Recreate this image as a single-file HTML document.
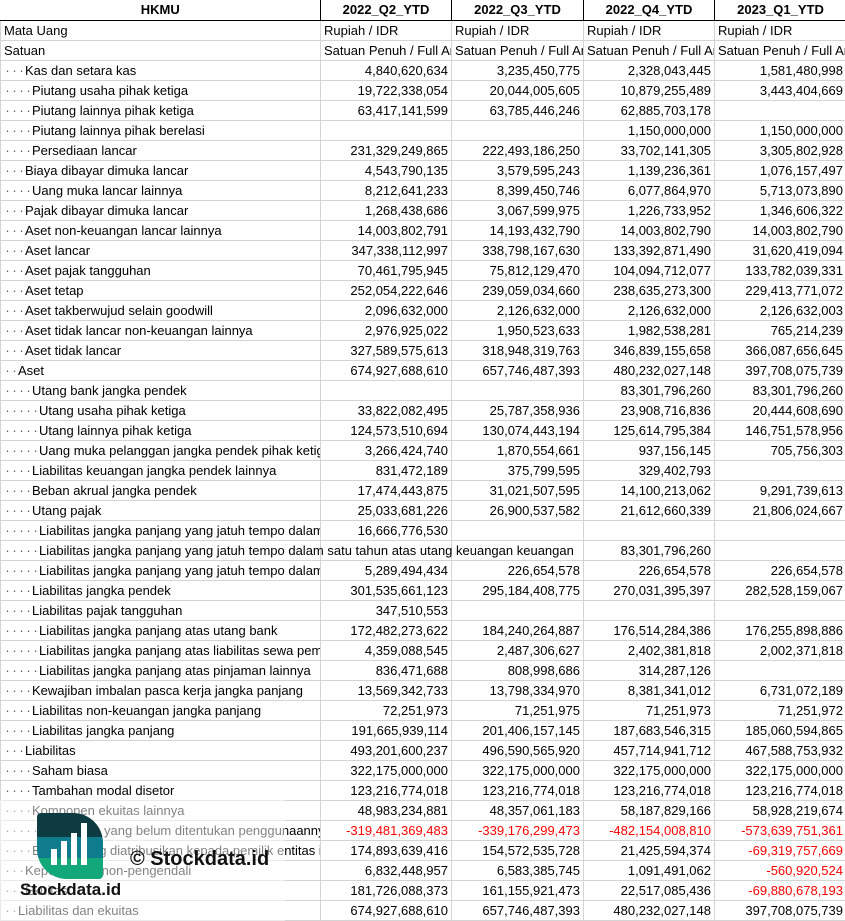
<!DOCTYPE html>
<html><head><meta charset="utf-8"><style>
*{margin:0;padding:0;box-sizing:border-box}
body{width:845px;height:921px;overflow:hidden;background:#fff;font-family:"Liberation Sans",sans-serif;font-size:13px;color:#000;position:relative}
table{border-collapse:collapse;table-layout:fixed;width:846px}
td{height:20px;border:1px solid #d4d4d4;white-space:nowrap;padding:1px 3px 0 3px;line-height:17px;overflow:hidden}
td.n{text-align:right}
td.l{overflow:visible}
td.l div{overflow:hidden;width:316px}
td.l div.w{width:580px;position:relative;z-index:2}
tr.h td{font-weight:bold;text-align:center;border:1px solid #000;border-top:none;padding-top:0;line-height:18px}
tr.h td:first-child{border-left:none}
.d{display:inline-block;width:7px;text-align:center;color:#555}
.r{color:#f00}
.ov{position:absolute;left:0;top:800px;width:285px;height:121px;background:rgba(255,255,255,.5);z-index:3}
.logo{position:absolute;left:37px;top:813px;width:66px;height:66px;border-radius:4px 30px 4px 30px;overflow:hidden;z-index:4;background:linear-gradient(#0d3b3f 0 36%,#0e7c8c 36% 68%,#12a87a 68%)}
.bar{position:absolute;bottom:14px;width:6px;background:#fff}
.wm1{position:absolute;left:130px;top:848px;font-weight:bold;font-size:20px;z-index:4;color:#111}
.wm2{position:absolute;left:20px;top:880px;font-weight:bold;font-size:17px;z-index:4;color:#111}
</style></head><body>
<table>
<colgroup><col style="width:320px"><col style="width:131px"><col style="width:132px"><col style="width:131px"><col style="width:132px"></colgroup>
<tr class="h"><td>HKMU</td><td>2022_Q2_YTD</td><td>2022_Q3_YTD</td><td>2022_Q4_YTD</td><td>2023_Q1_YTD</td></tr>
<tr><td>Mata Uang</td><td>Rupiah / IDR</td><td>Rupiah / IDR</td><td>Rupiah / IDR</td><td>Rupiah / IDR</td></tr>
<tr><td>Satuan</td><td style="padding-right:0">Satuan Penuh / Full Amount</td><td style="padding-right:0">Satuan Penuh / Full Amount</td><td style="padding-right:0">Satuan Penuh / Full Amount</td><td style="padding-right:0">Satuan Penuh / Full Amount</td></tr>
<tr><td class="l"><div><span class="d">·</span><span class="d">·</span><span class="d">·</span>Kas dan setara kas</div></td><td class="n">4,840,620,634</td><td class="n">3,235,450,775</td><td class="n">2,328,043,445</td><td class="n">1,581,480,998</td></tr>
<tr><td class="l"><div><span class="d">·</span><span class="d">·</span><span class="d">·</span><span class="d">·</span>Piutang usaha pihak ketiga</div></td><td class="n">19,722,338,054</td><td class="n">20,044,005,605</td><td class="n">10,879,255,489</td><td class="n">3,443,404,669</td></tr>
<tr><td class="l"><div><span class="d">·</span><span class="d">·</span><span class="d">·</span><span class="d">·</span>Piutang lainnya pihak ketiga</div></td><td class="n">63,417,141,599</td><td class="n">63,785,446,246</td><td class="n">62,885,703,178</td><td class="n"></td></tr>
<tr><td class="l"><div><span class="d">·</span><span class="d">·</span><span class="d">·</span><span class="d">·</span>Piutang lainnya pihak berelasi</div></td><td class="n"></td><td class="n"></td><td class="n">1,150,000,000</td><td class="n">1,150,000,000</td></tr>
<tr><td class="l"><div><span class="d">·</span><span class="d">·</span><span class="d">·</span><span class="d">·</span>Persediaan lancar</div></td><td class="n">231,329,249,865</td><td class="n">222,493,186,250</td><td class="n">33,702,141,305</td><td class="n">3,305,802,928</td></tr>
<tr><td class="l"><div><span class="d">·</span><span class="d">·</span><span class="d">·</span>Biaya dibayar dimuka lancar</div></td><td class="n">4,543,790,135</td><td class="n">3,579,595,243</td><td class="n">1,139,236,361</td><td class="n">1,076,157,497</td></tr>
<tr><td class="l"><div><span class="d">·</span><span class="d">·</span><span class="d">·</span><span class="d">·</span>Uang muka lancar lainnya</div></td><td class="n">8,212,641,233</td><td class="n">8,399,450,746</td><td class="n">6,077,864,970</td><td class="n">5,713,073,890</td></tr>
<tr><td class="l"><div><span class="d">·</span><span class="d">·</span><span class="d">·</span>Pajak dibayar dimuka lancar</div></td><td class="n">1,268,438,686</td><td class="n">3,067,599,975</td><td class="n">1,226,733,952</td><td class="n">1,346,606,322</td></tr>
<tr><td class="l"><div><span class="d">·</span><span class="d">·</span><span class="d">·</span>Aset non-keuangan lancar lainnya</div></td><td class="n">14,003,802,791</td><td class="n">14,193,432,790</td><td class="n">14,003,802,790</td><td class="n">14,003,802,790</td></tr>
<tr><td class="l"><div><span class="d">·</span><span class="d">·</span><span class="d">·</span>Aset lancar</div></td><td class="n">347,338,112,997</td><td class="n">338,798,167,630</td><td class="n">133,392,871,490</td><td class="n">31,620,419,094</td></tr>
<tr><td class="l"><div><span class="d">·</span><span class="d">·</span><span class="d">·</span>Aset pajak tangguhan</div></td><td class="n">70,461,795,945</td><td class="n">75,812,129,470</td><td class="n">104,094,712,077</td><td class="n">133,782,039,331</td></tr>
<tr><td class="l"><div><span class="d">·</span><span class="d">·</span><span class="d">·</span>Aset tetap</div></td><td class="n">252,054,222,646</td><td class="n">239,059,034,660</td><td class="n">238,635,273,300</td><td class="n">229,413,771,072</td></tr>
<tr><td class="l"><div><span class="d">·</span><span class="d">·</span><span class="d">·</span>Aset takberwujud selain goodwill</div></td><td class="n">2,096,632,000</td><td class="n">2,126,632,000</td><td class="n">2,126,632,000</td><td class="n">2,126,632,003</td></tr>
<tr><td class="l"><div><span class="d">·</span><span class="d">·</span><span class="d">·</span>Aset tidak lancar non-keuangan lainnya</div></td><td class="n">2,976,925,022</td><td class="n">1,950,523,633</td><td class="n">1,982,538,281</td><td class="n">765,214,239</td></tr>
<tr><td class="l"><div><span class="d">·</span><span class="d">·</span><span class="d">·</span>Aset tidak lancar</div></td><td class="n">327,589,575,613</td><td class="n">318,948,319,763</td><td class="n">346,839,155,658</td><td class="n">366,087,656,645</td></tr>
<tr><td class="l"><div><span class="d">·</span><span class="d">·</span>Aset</div></td><td class="n">674,927,688,610</td><td class="n">657,746,487,393</td><td class="n">480,232,027,148</td><td class="n">397,708,075,739</td></tr>
<tr><td class="l"><div><span class="d">·</span><span class="d">·</span><span class="d">·</span><span class="d">·</span>Utang bank jangka pendek</div></td><td class="n"></td><td class="n"></td><td class="n">83,301,796,260</td><td class="n">83,301,796,260</td></tr>
<tr><td class="l"><div><span class="d">·</span><span class="d">·</span><span class="d">·</span><span class="d">·</span><span class="d">·</span>Utang usaha pihak ketiga</div></td><td class="n">33,822,082,495</td><td class="n">25,787,358,936</td><td class="n">23,908,716,836</td><td class="n">20,444,608,690</td></tr>
<tr><td class="l"><div><span class="d">·</span><span class="d">·</span><span class="d">·</span><span class="d">·</span><span class="d">·</span>Utang lainnya pihak ketiga</div></td><td class="n">124,573,510,694</td><td class="n">130,074,443,194</td><td class="n">125,614,795,384</td><td class="n">146,751,578,956</td></tr>
<tr><td class="l"><div><span class="d">·</span><span class="d">·</span><span class="d">·</span><span class="d">·</span><span class="d">·</span>Uang muka pelanggan jangka pendek pihak ketiga</div></td><td class="n">3,266,424,740</td><td class="n">1,870,554,661</td><td class="n">937,156,145</td><td class="n">705,756,303</td></tr>
<tr><td class="l"><div><span class="d">·</span><span class="d">·</span><span class="d">·</span><span class="d">·</span>Liabilitas keuangan jangka pendek lainnya</div></td><td class="n">831,472,189</td><td class="n">375,799,595</td><td class="n">329,402,793</td><td class="n"></td></tr>
<tr><td class="l"><div><span class="d">·</span><span class="d">·</span><span class="d">·</span><span class="d">·</span>Beban akrual jangka pendek</div></td><td class="n">17,474,443,875</td><td class="n">31,021,507,595</td><td class="n">14,100,213,062</td><td class="n">9,291,739,613</td></tr>
<tr><td class="l"><div><span class="d">·</span><span class="d">·</span><span class="d">·</span><span class="d">·</span>Utang pajak</div></td><td class="n">25,033,681,226</td><td class="n">26,900,537,582</td><td class="n">21,612,660,339</td><td class="n">21,806,024,667</td></tr>
<tr><td class="l"><div><span class="d">·</span><span class="d">·</span><span class="d">·</span><span class="d">·</span><span class="d">·</span>Liabilitas jangka panjang yang jatuh tempo dalam satu tahun</div></td><td class="n">16,666,776,530</td><td class="n"></td><td class="n"></td><td class="n"></td></tr>
<tr><td class="l"><div class="w"><span class="d">·</span><span class="d">·</span><span class="d">·</span><span class="d">·</span><span class="d">·</span>Liabilitas jangka panjang yang jatuh tempo dalam satu tahun atas utang keuangan keuangan</div></td><td class="n"></td><td class="n"></td><td class="n">83,301,796,260</td><td class="n"></td></tr>
<tr><td class="l"><div><span class="d">·</span><span class="d">·</span><span class="d">·</span><span class="d">·</span><span class="d">·</span>Liabilitas jangka panjang yang jatuh tempo dalam satu tahun</div></td><td class="n">5,289,494,434</td><td class="n">226,654,578</td><td class="n">226,654,578</td><td class="n">226,654,578</td></tr>
<tr><td class="l"><div><span class="d">·</span><span class="d">·</span><span class="d">·</span><span class="d">·</span>Liabilitas jangka pendek</div></td><td class="n">301,535,661,123</td><td class="n">295,184,408,775</td><td class="n">270,031,395,397</td><td class="n">282,528,159,067</td></tr>
<tr><td class="l"><div><span class="d">·</span><span class="d">·</span><span class="d">·</span><span class="d">·</span>Liabilitas pajak tangguhan</div></td><td class="n">347,510,553</td><td class="n"></td><td class="n"></td><td class="n"></td></tr>
<tr><td class="l"><div><span class="d">·</span><span class="d">·</span><span class="d">·</span><span class="d">·</span><span class="d">·</span>Liabilitas jangka panjang atas utang bank</div></td><td class="n">172,482,273,622</td><td class="n">184,240,264,887</td><td class="n">176,514,284,386</td><td class="n">176,255,898,886</td></tr>
<tr><td class="l"><div><span class="d">·</span><span class="d">·</span><span class="d">·</span><span class="d">·</span><span class="d">·</span>Liabilitas jangka panjang atas liabilitas sewa pembiayaan</div></td><td class="n">4,359,088,545</td><td class="n">2,487,306,627</td><td class="n">2,402,381,818</td><td class="n">2,002,371,818</td></tr>
<tr><td class="l"><div><span class="d">·</span><span class="d">·</span><span class="d">·</span><span class="d">·</span><span class="d">·</span>Liabilitas jangka panjang atas pinjaman lainnya</div></td><td class="n">836,471,688</td><td class="n">808,998,686</td><td class="n">314,287,126</td><td class="n"></td></tr>
<tr><td class="l"><div><span class="d">·</span><span class="d">·</span><span class="d">·</span><span class="d">·</span>Kewajiban imbalan pasca kerja jangka panjang</div></td><td class="n">13,569,342,733</td><td class="n">13,798,334,970</td><td class="n">8,381,341,012</td><td class="n">6,731,072,189</td></tr>
<tr><td class="l"><div><span class="d">·</span><span class="d">·</span><span class="d">·</span><span class="d">·</span>Liabilitas non-keuangan jangka panjang</div></td><td class="n">72,251,973</td><td class="n">71,251,975</td><td class="n">71,251,973</td><td class="n">71,251,972</td></tr>
<tr><td class="l"><div><span class="d">·</span><span class="d">·</span><span class="d">·</span><span class="d">·</span>Liabilitas jangka panjang</div></td><td class="n">191,665,939,114</td><td class="n">201,406,157,145</td><td class="n">187,683,546,315</td><td class="n">185,060,594,865</td></tr>
<tr><td class="l"><div><span class="d">·</span><span class="d">·</span><span class="d">·</span>Liabilitas</div></td><td class="n">493,201,600,237</td><td class="n">496,590,565,920</td><td class="n">457,714,941,712</td><td class="n">467,588,753,932</td></tr>
<tr><td class="l"><div><span class="d">·</span><span class="d">·</span><span class="d">·</span><span class="d">·</span>Saham biasa</div></td><td class="n">322,175,000,000</td><td class="n">322,175,000,000</td><td class="n">322,175,000,000</td><td class="n">322,175,000,000</td></tr>
<tr><td class="l"><div><span class="d">·</span><span class="d">·</span><span class="d">·</span><span class="d">·</span>Tambahan modal disetor</div></td><td class="n">123,216,774,018</td><td class="n">123,216,774,018</td><td class="n">123,216,774,018</td><td class="n">123,216,774,018</td></tr>
<tr><td class="l"><div><span class="d">·</span><span class="d">·</span><span class="d">·</span><span class="d">·</span>Komponen ekuitas lainnya</div></td><td class="n">48,983,234,881</td><td class="n">48,357,061,183</td><td class="n">58,187,829,166</td><td class="n">58,928,219,674</td></tr>
<tr><td class="l"><div><span class="d">·</span><span class="d">·</span><span class="d">·</span><span class="d">·</span><span class="d">·</span>Saldo laba yang belum ditentukan penggunaannya</div></td><td class="n r">-319,481,369,483</td><td class="n r">-339,176,299,473</td><td class="n r">-482,154,008,810</td><td class="n r">-573,639,751,361</td></tr>
<tr><td class="l"><div><span class="d">·</span><span class="d">·</span><span class="d">·</span><span class="d">·</span>Ekuitas yang diatribusikan kepada pemilik entitas induk</div></td><td class="n">174,893,639,416</td><td class="n">154,572,535,728</td><td class="n">21,425,594,374</td><td class="n r">-69,319,757,669</td></tr>
<tr><td class="l"><div><span class="d">·</span><span class="d">·</span><span class="d">·</span>Kepentingan non-pengendali</div></td><td class="n">6,832,448,957</td><td class="n">6,583,385,745</td><td class="n">1,091,491,062</td><td class="n r">-560,920,524</td></tr>
<tr><td class="l"><div><span class="d">·</span><span class="d">·</span><span class="d">·</span>Ekuitas</div></td><td class="n">181,726,088,373</td><td class="n">161,155,921,473</td><td class="n">22,517,085,436</td><td class="n r">-69,880,678,193</td></tr>
<tr><td class="l"><div><span class="d">·</span><span class="d">·</span>Liabilitas dan ekuitas</div></td><td class="n">674,927,688,610</td><td class="n">657,746,487,393</td><td class="n">480,232,027,148</td><td class="n">397,708,075,739</td></tr>
</table>
<div class="ov"></div>
<div class="logo"><div class="bar" style="left:14px;height:16px"></div><div class="bar" style="left:24px;height:24px"></div><div class="bar" style="left:34px;height:32px"></div><div class="bar" style="left:44px;height:42px"></div></div>
<div class="wm1">© Stockdata.id</div>
<div class="wm2">Stockdata.id</div>
</body></html>
